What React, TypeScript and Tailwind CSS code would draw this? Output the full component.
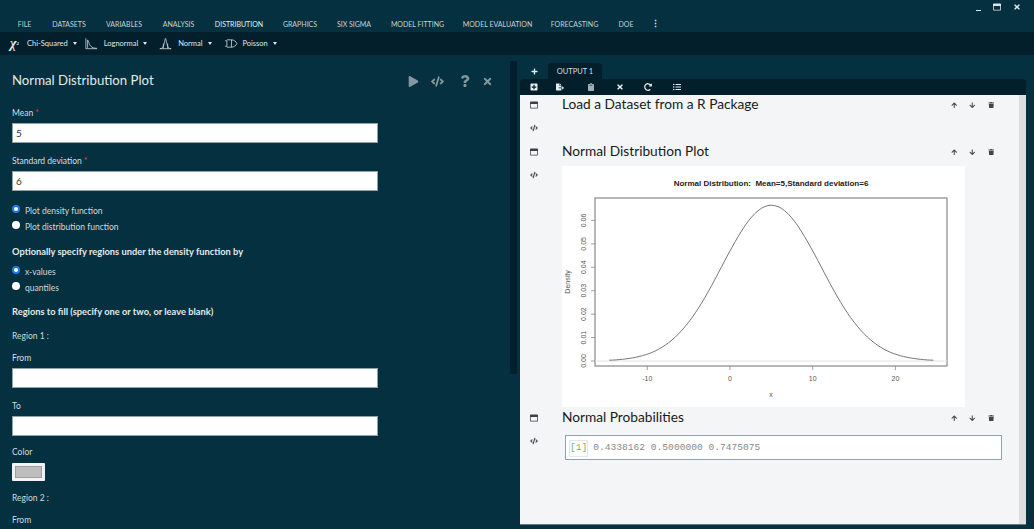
import {
  FaArrowDown,
  FaArrowUp,
  FaCode,
  FaPlay,
  FaPlus,
  FaPlusSquare,
  FaFileExport,
  FaQuestion,
  FaRedoAlt,
  FaRegWindowMaximize,
  FaTimes,
  FaTrash,
  FaClipboard,
  FaListUl,
} from "react-icons/fa";

const tabs = [
  { label: "FILE", cls: "w-[35px]" },
  { label: "DATASETS", cls: "w-[54px]" },
  { label: "VARIABLES", cls: "w-[56px]" },
  { label: "ANALYSIS", cls: "w-[53px]" },
  { label: "DISTRIBUTION", cls: "w-[68px] bg-[#05303f] rounded-t text-[#e6eef0]" },
  { label: "GRAPHICS", cls: "w-[54px]" },
  { label: "SIX SIGMA", cls: "w-[54px]" },
  { label: "MODEL FITTING", cls: "w-[73px]" },
  { label: "MODEL EVALUATION", cls: "w-[87px]" },
  { label: "FORECASTING", cls: "w-[67px]" },
  { label: "DOE", cls: "w-[36px]" },
];

function Caret() {
  return <span className="ml-[5px] inline-block border-x-[2.5px] border-t-[3px] border-x-transparent border-t-[#dfe7ea]" />;
}

function LognormalIcon() {
  return (
    <svg width="13" height="13" viewBox="0 0 15 14" fill="none" stroke="#cfd8dc" strokeWidth="0.9">
      <path d="M1 1v12h13" />
      <path d="M3 12V3c1 0 1.500 5 3.500 7s4 2.500 7 2.500" />
    </svg>
  );
}

function NormalIcon() {
  return (
    <svg width="13" height="13" viewBox="0 0 15 14" fill="none" stroke="#cfd8dc" strokeWidth="0.9">
      <path d="M1 13c3 0 4-2 5-6s1-6 1.500-6 .5 2 1.500 6 2 6 5 6" />
      <path d="M5 13V7M10 13V7M1 13h13" />
    </svg>
  );
}

function PoissonIcon() {
  return (
    <svg width="14" height="11" viewBox="0 0 15 12" fill="none" stroke="#cfd8dc" strokeWidth="0.9">
      <path d="M1 3h2v6H1M3 2h5v8H3M8 2c3 0 5 2 6 4-1 2-3 4-6 4" />
    </svg>
  );
}

function Field({ label, value, required }: { label: string; value?: string; required?: boolean }) {
  return (
    <div>
      <p className="text-[8.500px] leading-[12px] text-[#d5dfe2]">
        {label}
        {required ? <span className="ml-[2px] text-[#e0453a]">*</span> : null}
      </p>
      <div className="mt-[4px] flex h-[20px] w-[366px] items-center border border-[#8fa3ab] bg-white px-[3px] text-[10px] text-[#333]">
        {value}
      </div>
    </div>
  );
}

function Radio({ label, checked }: { label: string; checked?: boolean }) {
  return (
    <div className="flex h-[16px] items-center text-[8.500px] text-[#cfdadd]">
      <span
        className={
          checked
            ? "-mt-[4px] h-[8px] w-[8px] rounded-full border-[2.500px] border-[#1f7cf0] bg-white"
            : "-mt-[4px] h-[8px] w-[8px] rounded-full bg-white"
        }
      />
      <span className="ml-[5px]">{label}</span>
    </div>
  );
}

function NormalPlot() {
  const px = (x: number) => 168 + x * 8.27;
  const py = (d: number) => 195 - d * 2343;
  const points: string[] = [];
  for (let x = -14.6; x <= 24.6; x += 0.4) {
    const d = Math.exp(-((x - 5) ** 2) / 72) / (6 * Math.sqrt(2 * Math.PI));
    points.push(`${px(x).toFixed(1)},${py(d).toFixed(1)}`);
  }
  const yTicks = [0, 0.01, 0.02, 0.03, 0.04, 0.05, 0.06];
  const xTicks = [-10, 0, 10, 20];

  return (
    <svg width="403" height="241" viewBox="0 0 403 241" className="bg-white" fontFamily="'Liberation Sans', sans-serif">
      <text x="209" y="20" textAnchor="middle" fontSize="8" fontWeight="700" fill="#222" className="whitespace-pre">
        Normal Distribution:  Mean=5,Standard deviation=6
      </text>
      <rect x="33" y="32" width="352" height="168" fill="none" stroke="#888" strokeWidth="1.200" />
      <line x1="33" y1="195" x2="385" y2="195" stroke="#e3e3e3" strokeWidth="1.200" />
      <polyline points={points.join(" ")} fill="none" stroke="#777" strokeWidth="1" />
      {xTicks.map((t) => (
        <g key={t}>
          <line x1={px(t)} x2={px(t)} y1="200" y2="204" stroke="#888" strokeWidth="0.800" />
          <text x={px(t)} y="215" textAnchor="middle" fontSize="7" fill="#555">
            {t}
          </text>
        </g>
      ))}
      {yTicks.map((t) => (
        <g key={t}>
          <line x1="29" x2="33" y1={py(t)} y2={py(t)} stroke="#888" strokeWidth="0.800" />
          <text
            transform={`translate(24 ${py(t)}) rotate(-90)`}
            textAnchor="middle"
            fontSize="7"
            fill="#555"
          >
            {t.toFixed(2)}
          </text>
        </g>
      ))}
      <text x="209" y="231" textAnchor="middle" fontSize="7" fill="#555">
        x
      </text>
      <text transform="translate(8 116) rotate(-90)" textAnchor="middle" fontSize="7" fill="#555">
        Density
      </text>
    </svg>
  );
}

function OutputBlock({
  title,
  children,
  className,
}: {
  title: string;
  children?: React.ReactNode;
  className: string;
}) {
  return (
    <div className={`flex ${className}`}>
      <div className="flex w-[42px] flex-col items-start pl-[10px] text-[#3a4246]">
        <FaRegWindowMaximize className="mt-[6px] text-[8px]" />
        <FaCode className="mt-[15px] text-[8px]" />
      </div>
      <div className="min-w-0 flex-1">
        <div className="flex h-[18px] items-center justify-between pr-[25px]">
          <h3 className="text-[13.700px] leading-[18px] text-[#161c20]">{title}</h3>
          <div className="mt-[2px] flex items-center gap-[12px] text-[#444]">
            <FaArrowUp className="text-[6.500px]" />
            <FaArrowDown className="text-[6.500px]" />
            <FaTrash className="text-[6.500px]" />
          </div>
        </div>
        {children}
      </div>
    </div>
  );
}

export default function App() {
  return (
    <div className="flex h-[529px] w-[1034px] flex-col overflow-hidden bg-[#05303f] font-['Lato','Liberation_Sans',sans-serif]">
      <div className="flex h-[16px] shrink-0 items-start justify-end gap-[12px] pt-[3px] pr-[13px] text-[#dfe7ea]">
        <span className="mt-[7px] h-[1px] w-[5px] bg-[#dfe7ea]" />
        <FaRegWindowMaximize className="text-[8px]" />
        <FaTimes className="text-[8px]" />
      </div>

      <nav className="flex h-[16px] shrink-0 items-stretch pl-[7px]">
        {tabs.map((tab) => (
          <div
            key={tab.label}
            className={`flex items-center justify-center text-[7px] text-[#c5d1d5] ${tab.cls}`}
          >
            {tab.label}
          </div>
        ))}
        <div className="flex w-[22px] items-center justify-center text-[9px] font-bold text-[#dfe7ea]">⋮</div>
      </nav>

      <div className="flex h-[23px] shrink-0 items-center bg-[#031f2b] pl-[10px] text-[7.500px] text-[#dfe7ea]">
        <span className="w-[15px] font-['Liberation_Serif',serif] text-[14px] font-bold italic leading-none">
          χ<sup className="text-[5px]">2</sup>
        </span>
        <span className="ml-[2px]">Chi-Squared</span>
        <Caret />
        <span className="ml-[8px]">
          <LognormalIcon />
        </span>
        <span className="ml-[6px]">Lognormal</span>
        <Caret />
        <span className="ml-[12px]">
          <NormalIcon />
        </span>
        <span className="ml-[6px]">Normal</span>
        <Caret />
        <span className="ml-[12px]">
          <PoissonIcon />
        </span>
        <span className="ml-[5px]">Poisson</span>
        <Caret />
      </div>

      <div className="flex min-h-0 flex-1">
        <main className="flex w-[510px] shrink-0 flex-col overflow-hidden pl-[12px]">
          <div className="mt-[16px] flex h-[20px] shrink-0 items-center justify-between pr-[17px]">
            <h1 className="text-[13.200px] text-[#e3eaec]">Normal Distribution Plot</h1>
            <div className="flex items-center text-[#82989f]">
              <FaPlay className="text-[11px]" />
              <FaCode className="ml-[12px] text-[13px]" />
              <FaQuestion className="ml-[15px] text-[12px]" />
              <FaTimes className="ml-[11px] text-[11px]" />
            </div>
          </div>

          <div className="mt-[16px] shrink-0">
            <Field label="Mean" value="5" required />
          </div>
          <div className="mt-[12px] shrink-0">
            <Field label="Standard deviation" value="6" required />
          </div>

          <div className="mt-[12px] shrink-0">
            <Radio label="Plot density function" checked />
            <Radio label="Plot distribution function" />
          </div>

          <h2 className="mt-[11px] shrink-0 text-[9.300px] leading-[12px] font-bold text-[#e3eaec]">
            Optionally specify regions under the density function by
          </h2>
          <div className="mt-[6px] shrink-0">
            <Radio label="x-values" checked />
            <Radio label="quantiles" />
          </div>
          <h2 className="mt-[10px] shrink-0 text-[9.300px] leading-[12px] font-bold text-[#e3eaec]">
            Regions to fill (specify one or two, or leave blank)
          </h2>
          <p className="mt-[12px] shrink-0 text-[8.500px] leading-[12px] text-[#cfdadd]">Region 1 :</p>

          <div className="mt-[10px] shrink-0">
            <Field label="From" />
          </div>
          <div className="mt-[12px] shrink-0">
            <Field label="To" />
          </div>

          <p className="mt-[10px] shrink-0 text-[8.500px] leading-[12px] text-[#cfdadd]">Color</p>
          <div className="mt-[5px] h-[18px] w-[33px] shrink-0 rounded-[1px] bg-[#f2f2f2] p-[3px]">
            <div className="h-full w-full border border-[#9f9f9f] bg-[#bdbdbd]" />
          </div>
          <p className="mt-[11px] shrink-0 text-[8.500px] leading-[12px] text-[#cfdadd]">Region 2 :</p>
          <p className="mt-[10px] shrink-0 text-[8.500px] leading-[12px] text-[#cfdadd]">From</p>
        </main>

        <div className="mt-[6px] h-[313px] w-[7px] shrink-0 bg-[#031f2b]" />
        <div className="w-[3px] shrink-0" />

        <section className="flex w-[506px] shrink-0 flex-col pb-[4px]">
          <div className="flex h-[24px] shrink-0 items-end">
            <div className="flex h-[16px] w-[28px] items-center justify-center text-[#e6eef0]">
              <FaPlus className="text-[7px]" />
            </div>
            <div className="flex h-[16px] w-[54px] items-center justify-center rounded-t bg-[#031f2b] pt-[1px] text-[7.500px] text-[#d5dfe2]">
              OUTPUT 1
            </div>
          </div>
          <div className="flex h-[16px] shrink-0 items-center rounded-t bg-[#031f2b] pl-[10px] text-[#e6eef0]">
            <FaPlusSquare className="text-[8px]" />
            <FaFileExport className="ml-[18px] text-[8px]" />
            <FaClipboard className="ml-[23px] text-[8px] text-[#9fb0b6]" />
            <FaTimes className="ml-[21px] text-[8px]" />
            <FaRedoAlt className="ml-[20px] text-[8px]" />
            <FaListUl className="ml-[21px] text-[8px]" />
          </div>
          <div className="flex min-h-0 flex-1 border-b border-[#6d7b80] bg-[#f4f5f7]">
            <div className="min-w-0 flex-1">
              <OutputBlock title="Load a Dataset from a R Package" className="h-[47px]" />
              <OutputBlock title="Normal Distribution Plot" className="h-[266px]">
                <div className="mt-[6px] w-[403px]">
                  <NormalPlot />
                </div>
              </OutputBlock>
              <OutputBlock title="Normal Probabilities" className="">
                <div className="mt-[9px] ml-[3px] flex h-[25px] w-[437px] items-center border border-[#8fa3ab] bg-white pt-[2px] pl-[3px] font-['Liberation_Mono',monospace] text-[9.600px] text-[#8a8a8a]">
                  <span className="border border-[#e6e6e6] text-[#6fb57a]">[1]</span>
                  <span className="ml-[5px]">0.4338162 0.5000000 0.7475075</span>
                </div>
              </OutputBlock>
            </div>
            <div className="w-[7px] shrink-0 bg-[#dedede]" />
          </div>
        </section>
      </div>
    </div>
  );
}
